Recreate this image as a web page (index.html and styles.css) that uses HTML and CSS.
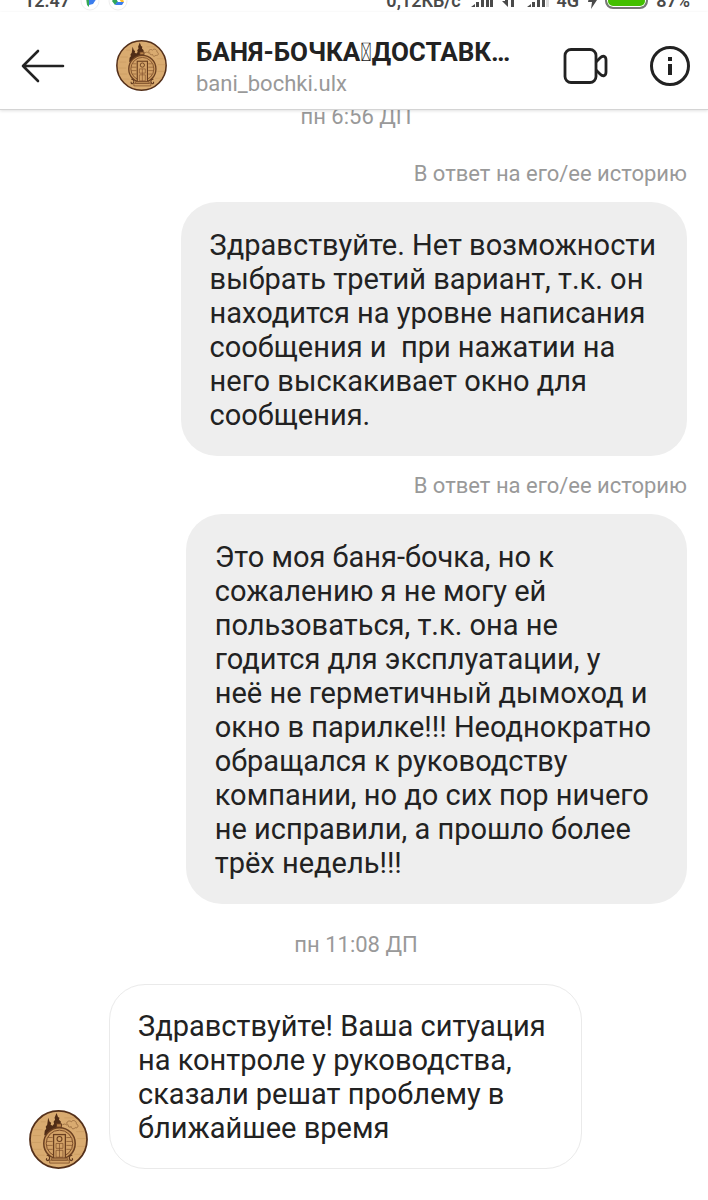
FILE: index.html
```html
<!DOCTYPE html>
<html lang="ru">
<head>
  <meta charset="UTF-8" />
  <meta name="viewport" content="width=device-width, initial-scale=1.0"/>
  <title>bani_bochki.ulx</title>
  <link rel="stylesheet" href="styles.css">
</head>
<body>
  <!-- Wooden barrel logo, used in the header and next to messages -->
  <svg class="defs" aria-hidden="true">
    <symbol id="logo" viewBox="0 0 60 60">
      <circle cx="30" cy="30" r="29" fill="#d9ab70" stroke="#54301a" stroke-width="1.800"/>
      <g stroke="#c99a60" stroke-width=".7" fill="none">
        <path d="M5 20h9M4 26h8M3 33h9M4 40h9M8 46h8M48 22h8M49 29h9M49 37h8M46 45h8M36 8h10M12 12h5"/>
      </g>
      <path d="M19.500 8l1.500 4 1.500 1-.5 2 2 1 .5 7-9 3 .5-5 1.500-2-.5-2 1.500-2zM28 3l1.500 4 1.500 1-.5 2 2 2-.5 2 2 5-10.500 3 .5-6 1.500-2-.5-2 1.500-2-.5-2z" fill="#4f2c16"/>
      <path d="M28 17v-3h5v3" fill="#b98248" stroke="#5f371c" stroke-width="1"/>
      <path d="M34 15c3-2 4 1 5 0-2-3 2-5 4-3 2-3 6 0 5 2 3 1 2 5-1 4-2 2-4 1-4-1-2 1-4 0-3-2" fill="none" stroke="#9d7042" stroke-width="1"/>
      <circle cx="31" cy="34" r="16" fill="#cc9a5f" stroke="#6a3f20" stroke-width="1.500"/>
      <circle cx="31" cy="34" r="13.500" fill="#d3a267" stroke="#7b4b28" stroke-width="1"/>
      <path d="M19 28h5M18 32h6M18 36h6M19 40h5M38 28h5M38 32h6M38 36h6M38 40h5" stroke="#8a5a30" stroke-width=".8"/>
      <rect x="25" y="25" width="12" height="24" fill="#d3a267" stroke="#6a3f20" stroke-width="1.300"/>
      <path d="M27.500 34h7v5h-7zM27.500 41h7v7h-7zM31 34v14" fill="none" stroke="#7b4b28" stroke-width=".7"/>
      <circle cx="31" cy="29.500" r="2.500" fill="none" stroke="#6a3f20" stroke-width="1.100"/>
      <path d="M23 49h16v2H23zM21 51h20v3H21z" fill="#d3a267" stroke="#7b4b28" stroke-width=".8"/>
      <path d="M18 46c3 0 4 3 2 5-1 1-3 0-2-2M44 46c-3 0-4 3-2 5 1 1 3 0 2-2" fill="none" stroke="#5f371c" stroke-width="1.300"/>
    </symbol>
  </svg>

  <!-- Status bar -->
  <div class="status">
    <span class="clock">12:47</span>
    <svg class="app" width="20" height="20" viewBox="0 0 20 20">
      <circle cx="10" cy="10" r="9" fill="#fff" stroke="#eee"/>
      <path d="M6 7h11l-4 6-4 1z" fill="#3b7ded"/>
      <path d="M6 7l3 1v8l-2-2z" fill="#35a853"/>
    </svg>
    <svg class="app" width="20" height="20" viewBox="0 0 20 20">
      <circle cx="10" cy="10" r="9" fill="#fff" stroke="#eee"/>
      <path d="M4 10l3-4 3 5-3 3z" fill="#30a65a"/>
      <path d="M7 14l2-3h7l-2 3z" fill="#3b7ded"/>
      <path d="M10 6h4l2 5h-3z" fill="#fbc02d"/>
    </svg>
    <span class="speed">0,12КБ/с</span>
    <svg width="22" height="22" viewBox="0 0 22 22" fill="#4a4a4a">
      <path d="M0 17h4v-3zM5 12h3v5H5zM10 9h3v8h-3zM15 6h3v11h-3zM19 3h3v14h-3z"/>
    </svg>
    <svg class="arrows" width="14" height="22" viewBox="0 0 14 22" fill="#4a4a4a">
      <path d="M1 11h3V4h3v13zM10 4h3v13h-3z"/>
    </svg>
    <svg width="22" height="22" viewBox="0 0 22 22" fill="#4a4a4a">
      <path d="M0 17h4v-3zM5 12h3v5H5zM10 9h3v8h-3zM15 6h3v11h-3z"/>
      <path d="M19 3h3v14h-3z" fill="#ddd"/>
    </svg>
    <span>4G</span>
    <svg width="10" height="22" viewBox="0 0 10 22" fill="#4a4a4a">
      <path d="M3 2h6l-2 8h3L4 19l1-7H1z"/>
    </svg>
    <span class="battery"></span>
    <span class="percent">87%</span>
  </div>

  <header class="header">
    <button class="icon-btn back" aria-label="Назад">
      <svg width="44" height="34" viewBox="0 0 44 34">
        <path d="M42 17H2M17 2L2 17l15 15" fill="none" stroke="#222" stroke-width="2.600" stroke-linecap="round" stroke-linejoin="round"/>
      </svg>
    </button>
    <svg class="avatar"><use href="#logo"/></svg>
    <div class="who">
      <h1 class="name">БАНЯ-БОЧКА&#xE000;ДОСТАВК…</h1>
      <p class="nick">bani_bochki.ulx</p>
    </div>
    <button class="icon-btn" aria-label="Видеозвонок">
      <svg width="46" height="36" viewBox="0 0 46 36" fill="none" stroke="#222" stroke-width="2.800">
        <rect x="2" y="1.500" width="31" height="33" rx="6"/>
        <path d="M33 14l4-4c3-3 6-2 6 2v12c0 4-3 5-6 2l-4-4" stroke-linejoin="round"/>
      </svg>
    </button>
    <button class="icon-btn info" aria-label="Информация">
      <svg width="42" height="42" viewBox="0 0 42 42">
        <circle cx="21" cy="21" r="18.500" fill="none" stroke="#222" stroke-width="3"/>
        <path d="M19 12h4v4h-4zM19 19h4v11h-4z" fill="#222"/>
      </svg>
    </button>
  </header>

  <main class="chat">
    <p class="time">пн 6:56 ДП</p>

    <div class="msg out">
      <p class="reply">В ответ на его/ее историю</p>
      <p class="bubble wide">Здравствуйте. Нет возможности<br>
        выбрать третий вариант, т.к. он<br>
        находится на уровне написания<br>
        сообщения и&nbsp; при нажатии на<br>
        него выскакивает окно для<br>
        сообщения.</p>
    </div>

    <div class="msg out">
      <p class="reply">В ответ на его/ее историю</p>
      <p class="bubble">Это моя баня-бочка, но к<br>
        сожалению я не могу ей<br>
        пользоваться, т.к. она не<br>
        годится для эксплуатации, у<br>
        неё не герметичный дымоход и<br>
        окно в парилке!!! Неоднократно<br>
        обращался к руководству<br>
        компании, но до сих пор ничего<br>
        не исправили, а прошло более<br>
        трёх недель!!!</p>
    </div>

    <p class="time">пн 11:08 ДП</p>

    <div class="msg in">
      <svg class="avatar small"><use href="#logo"/></svg>
      <p class="bubble">Здравствуйте! Ваша ситуация<br>
        на контроле у руководства,<br>
        сказали решат проблему в<br>
        ближайшее время</p>
    </div>
  </main>
</body>
</html>
```
FILE: styles.css
```css
* { box-sizing: border-box; }
body { font-family: Roboto, "Noto Sans", sans-serif; background: #fff; color: #222; margin: 0; overflow-x: hidden; }
h1, p { margin: 0; }
.defs { display: none; }

/* status bar, partly scrolled off the top */
.status { display: flex; align-items: center; height: 22px; margin-top: -10px; padding: 0 18px 0 24px; gap: 8px; font-size: 18px; font-weight: 600; line-height: 22px; color: #4a4a4a; }
.clock { margin-right: 2px; }
.app { flex: none; }
.speed { margin-left: auto; margin-right: 2px; }
.arrows { margin-right: 4px; }
.battery { width: 43px; height: 16px; border: 2px solid #777; border-radius: 8px; background: #43c000; box-shadow: inset 0 0 0 1px #fff; }

.header { position: relative; z-index: 1; display: flex; align-items: center; height: 98px; padding: 10px 17px 0 21px; background: #fff; border-bottom: 1px solid #d4d4d4; box-shadow: 0 1px 3px rgba(0, 0, 0, 0.12); }
.icon-btn { display: flex; flex: none; padding: 0; border: none; background: none; cursor: pointer; }
.back { margin-right: 51px; }
.info { margin-left: 40px; }
.avatar { flex: none; width: 51px; height: 51px; }
.who { flex: 1; min-width: 0; margin-left: 29px; padding-top: 4px; }
.name { font-size: 26px; font-weight: 700; line-height: 32px; white-space: nowrap; }
.nick { font-size: 22px; line-height: 32px; color: #999; }

.chat { display: flex; flex-direction: column; margin-top: -6px; padding: 0 21px 32px 25px; }
.time { text-align: center; font-size: 22px; line-height: 26px; color: #999; }
.msg { display: flex; }
.out { flex-direction: column; align-items: flex-end; gap: 15px; margin-top: 17px; }
.time + .out { margin-top: 31px; }
.out + .time { margin-top: 28px; }
.in { align-items: flex-end; gap: 21px; margin-top: 26px; padding-left: 4px; }
.reply { font-size: 22px; line-height: 26px; color: #999; }
.bubble { padding: 26px 36px 24px 29px; border-radius: 36px; background: #eee; font-size: 29px; line-height: 34px; }
.wide { padding-right: 31px; }
.in .bubble { padding: 24px 35px 23px 28px; background: #fff; border: 1px solid #eaeaea; }
.small { width: 59px; height: 59px; }
```
